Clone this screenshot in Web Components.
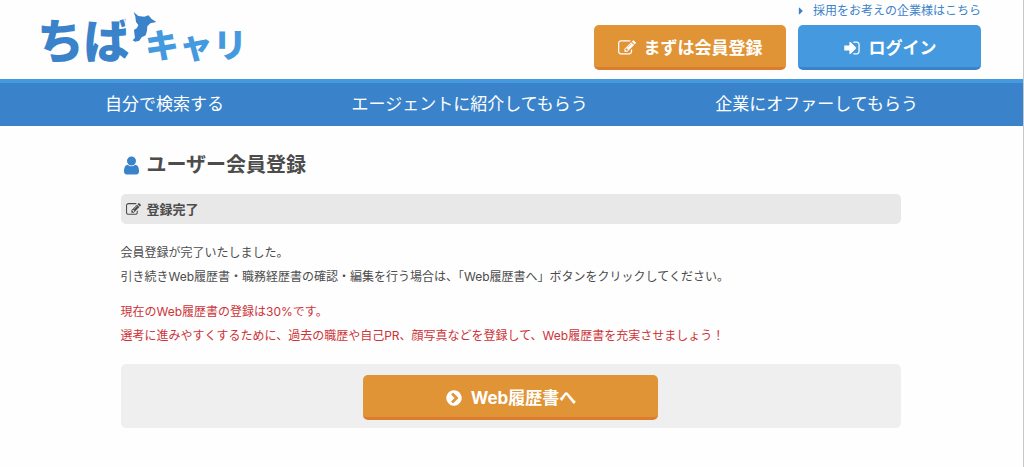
<!DOCTYPE html>
<html lang="ja">
<head>
<meta charset="utf-8">
<meta name="viewport" content="width=device-width, initial-scale=1">
<title>ユーザー会員登録 | ちばキャリ</title>
<style>
  body {
    margin: 0;
    min-height: 100vh;
    box-sizing: border-box;
    border-right: 1px solid #c4c8cc;
    background: #fefefe;
    color: #4c4c4c;
    font: 12px/24px Inter, "Noto Sans CJK JP", sans-serif;
    --blue: #3a83ca;
    --sky: #459adf;
    --orange: #e09436;
    --orange-dark: #dc7c2f;
    --red: #cd3338;
  }
</style>
</head>
<body>
<site-header></site-header>
<site-nav>
  <nav-item href="#search">自分で検索する</nav-item>
  <nav-item href="#agent">エージェントに紹介してもらう</nav-item>
  <nav-item href="#offer">企業にオファーしてもらう</nav-item>
</site-nav>
<page-main>
  <page-title>ユーザー会員登録</page-title>
  <section-bar>登録完了</section-bar>
  <text-block>会員登録が完了いたしました。<br>引き続きWeb履歴書・職務経歴書の確認・編集を行う場合は、「Web履歴書へ」ボタンをクリックしてください。</text-block>
  <text-block tone="alert">現在のWeb履歴書の登録は30%です。<br>選考に進みやすくするために、過去の職歴や自己PR、顔写真などを登録して、Web履歴書を充実させましょう！</text-block>
  <action-panel>
    <push-button icon="next">Web履歴書へ</push-button>
  </action-panel>
</page-main>

<script>
const ICONS = {
  edit: 'M888 1184l116-116-152-152-116 116v56h96v96h56zm440-720q-16-16-33 1l-350 350q-17 17-1 33t33-1l350-350q17-17 1-33zm80 594v190q0 119-84.5 203.5t-203.5 84.5h-832q-119 0-203.5-84.5t-84.5-203.5v-832q0-119 84.5-203.5t203.5-84.5h832q63 0 117 25 15 7 18 23 3 17-9 29l-49 49q-14 14-32 8-23-6-45-6h-832q-66 0-113 47t-47 113v832q0 66 47 113t113 47h832q66 0 113-47t47-113v-126q0-13 9-22l64-64q15-15 35-7t20 29zm-96-738l288 288-672 672h-288v-288zm444 132l-92 92-288-288 92-92q28-28 68-28t68 28l152 152q28 28 28 68t-28 68z',
  login: 'M1312 896q0 26-19 45l-544 544q-19 19-45 19t-45-19-19-45v-288h-448q-26 0-45-19t-19-45v-384q0-26 19-45t45-19h448v-288q0-26 19-45t45-19 45 19l544 544q19 19 19 45zm352-352v704q0 119-84.5 203.5t-203.5 84.5h-320q-13 0-22.5-9.5t-9.5-22.5q0-4-1-20t-.5-26.5 3-23.5 10-19.5 20.5-6.5h320q66 0 113-47t47-113v-704q0-66-47-113t-113-47h-312l-11.5-1-11.5-3-8-5.5-7-9-2-13.5q0-4-1-20t-.5-26.5 3-23.5 10-19.5 20.5-6.5h320q119 0 203.5 84.5t84.5 203.5z',
  next: 'M845 1395l454-454q19-19 19-45t-19-45l-454-454q-19-19-45-19t-45 19l-102 102q-19 19-19 45t19 45l307 307-307 307q-19 19-19 45t19 45l102 102q19 19 45 19t45-19zm819-499q0 209-103 385.5t-279.5 279.5-385.5 103-385.5-103-279.5-279.5-103-385.5 103-385.5 279.5-279.5 385.5-103 385.5 103 279.5 279.5 103 385.5z',
  user: 'M1536 1399q0 109-62.5 187t-150.5 78h-854q-88 0-150.5-78t-62.5-187q0-85 8.5-160.5t31.5-152 58.5-131 94-89 134.5-34.5q131 128 313 128t313-128q76 0 134.5 34.5t94 89 58.5 131 31.5 152 8.5 160.5zm-256-887q0 159-112.5 271.5t-271.5 112.5-271.5-112.5-112.5-271.5 112.5-271.5 271.5-112.5 271.5 112.5 112.5 271.5z',
  caret: 'M1152 896q0 26-19 45l-448 448q-19 19-45 19t-45-19-19-45v-896q0-26 19-45t45-19 45 19l448 448q19 19 19 45z'
};

function define(name, render) {
  customElements.define(name, class extends HTMLElement {
    constructor() {
      super();
      this.attachShadow({ mode: 'open' });
    }
    connectedCallback() {
      const template = document.createElement('template');
      template.innerHTML = render(this);
      this.shadowRoot.replaceChildren(template.content.cloneNode(true));
    }
  });
}

define('svg-icon', el => `
  <style>
    :host { display: block; flex: none; width: 1em; height: 1em; }
    svg { display: block; width: 100%; height: 100%; fill: currentColor; }
  </style>
  <svg viewBox="0 0 1792 1792" aria-hidden="true"><path d="${ICONS[el.getAttribute('name')]}"/></svg>`);

define('site-logo', () => `
  <style>
    :host { display: block; }
    a {
      position: relative; display: flex; align-items: baseline; gap: 14px; height: 56px;
      color: var(--blue); text-decoration: none; line-height: 56px;
      font-family: "Noto Sans CJK JP", sans-serif; font-weight: 900; white-space: nowrap;
    }
    .place { font-size: 47px; }
    .career { font-size: 34px; color: var(--sky); }
    /* the map of Chiba stands in for the voicing mark */
    svg { position: absolute; left: 86px; top: 0; width: 36px; height: 34px; fill: currentColor; }
  </style>
  <a href="#top"><span class="place">ちば</span><span class="career">キャリ</span>
    <svg viewBox="276 30 108 102" aria-hidden="true">
      <path fill="#fefefe" d="M283 36H320V90H296L283 78Z"/>
      <path d="M308 36L322 48 340 50 352 46 362 57 376 66 358 70 349 79 348 92 344 106 332 112 325 122 312 125 305 121 312 113 310 100 309 90 318 84 322 75 315 66 313 50Z"/>
    </svg>
  </a>`);

define('push-button', el => `
  <style>
    :host { display: block; --face: var(--orange); --edge: var(--orange-dark); }
    :host([tone="sky"]) { --face: var(--sky); --edge: var(--blue); }
    button {
      display: flex; align-items: center; justify-content: center; gap: 8px;
      box-sizing: border-box; width: 100%; height: 45px; margin: 0; padding: 3px 0 0;
      border: 0; border-bottom: 3px solid var(--edge); border-radius: 5px;
      background: var(--face); color: #fff; cursor: pointer;
      font: bold 17px/24px Inter, "Noto Sans CJK JP", sans-serif;
    }
    svg-icon { font-size: 18px; }
  </style>
  <button type="button"><svg-icon name="${el.getAttribute('icon')}"></svg-icon><span><slot></slot></span></button>`);

define('site-header', () => `
  <style>
    :host { display: flex; justify-content: space-between; align-items: flex-start; padding: 0 42px 9px 37px; }
    site-logo { padding-top: 10px; }
    .side { display: flex; flex-direction: column; align-items: flex-end; gap: 3px; }
    .company { display: flex; align-items: center; gap: 6px; color: var(--blue); text-decoration: none; line-height: 22px; }
    .buttons { display: grid; grid-template-columns: 192px 183px; gap: 12px; }
  </style>
  <site-logo></site-logo>
  <div class="side">
    <a class="company" href="#company"><svg-icon name="caret"></svg-icon>採用をお考えの企業様はこちら</a>
    <div class="buttons">
      <push-button icon="edit">まずは会員登録</push-button>
      <push-button icon="login" tone="sky">ログイン</push-button>
    </div>
  </div>`);

define('site-nav', () => `
  <style>
    :host { display: block; border-top: 4px solid var(--sky); background: var(--blue); }
    nav { display: flex; justify-content: space-between; padding: 0 105px; }
  </style>
  <nav><slot></slot></nav>`);

define('nav-item', el => `
  <style>
    :host { display: block; }
    a { display: block; color: #fff; text-decoration: none; font-size: 17px; line-height: 43px; white-space: nowrap; }
  </style>
  <a href="${el.getAttribute('href')}"><slot></slot></a>`);

define('page-main', () => `
  <style>
    :host { display: block; padding-right: 2px; }
    main { max-width: 780px; margin: 0 auto; padding: 25px 0; }
  </style>
  <main><slot></slot></main>`);

define('page-title', () => `
  <style>
    :host { display: block; }
    h1 { display: flex; align-items: center; gap: 5px; margin: 0 0 15px; font-size: 20px; line-height: 28px; }
    svg-icon { font-size: 21px; color: var(--blue); }
  </style>
  <h1><svg-icon name="user"></svg-icon><slot></slot></h1>`);

define('section-bar', () => `
  <style>
    :host { display: block; }
    h2 {
      display: flex; align-items: center; gap: 6px; margin: 0 0 17px; padding: 0 5px;
      border-radius: 5px; background: #e8e8e8; font-size: 13px; line-height: 30px;
    }
    svg-icon { font-size: 15px; }
  </style>
  <h2><svg-icon name="edit"></svg-icon><slot></slot></h2>`);

define('text-block', () => `
  <style>
    :host { display: block; }
    :host([tone="alert"]) { color: var(--red); }
    p { margin: 0 0 11px; }
  </style>
  <p><slot></slot></p>`);

define('action-panel', () => `
  <style>
    :host { display: block; }
    div { display: flex; justify-content: center; margin-top: 16px; padding: 11px 0 8px; border-radius: 5px; background: #efefef; }
    ::slotted(push-button) { width: 295px; }
  </style>
  <div><slot></slot></div>`);
</script>
</body>
</html>
